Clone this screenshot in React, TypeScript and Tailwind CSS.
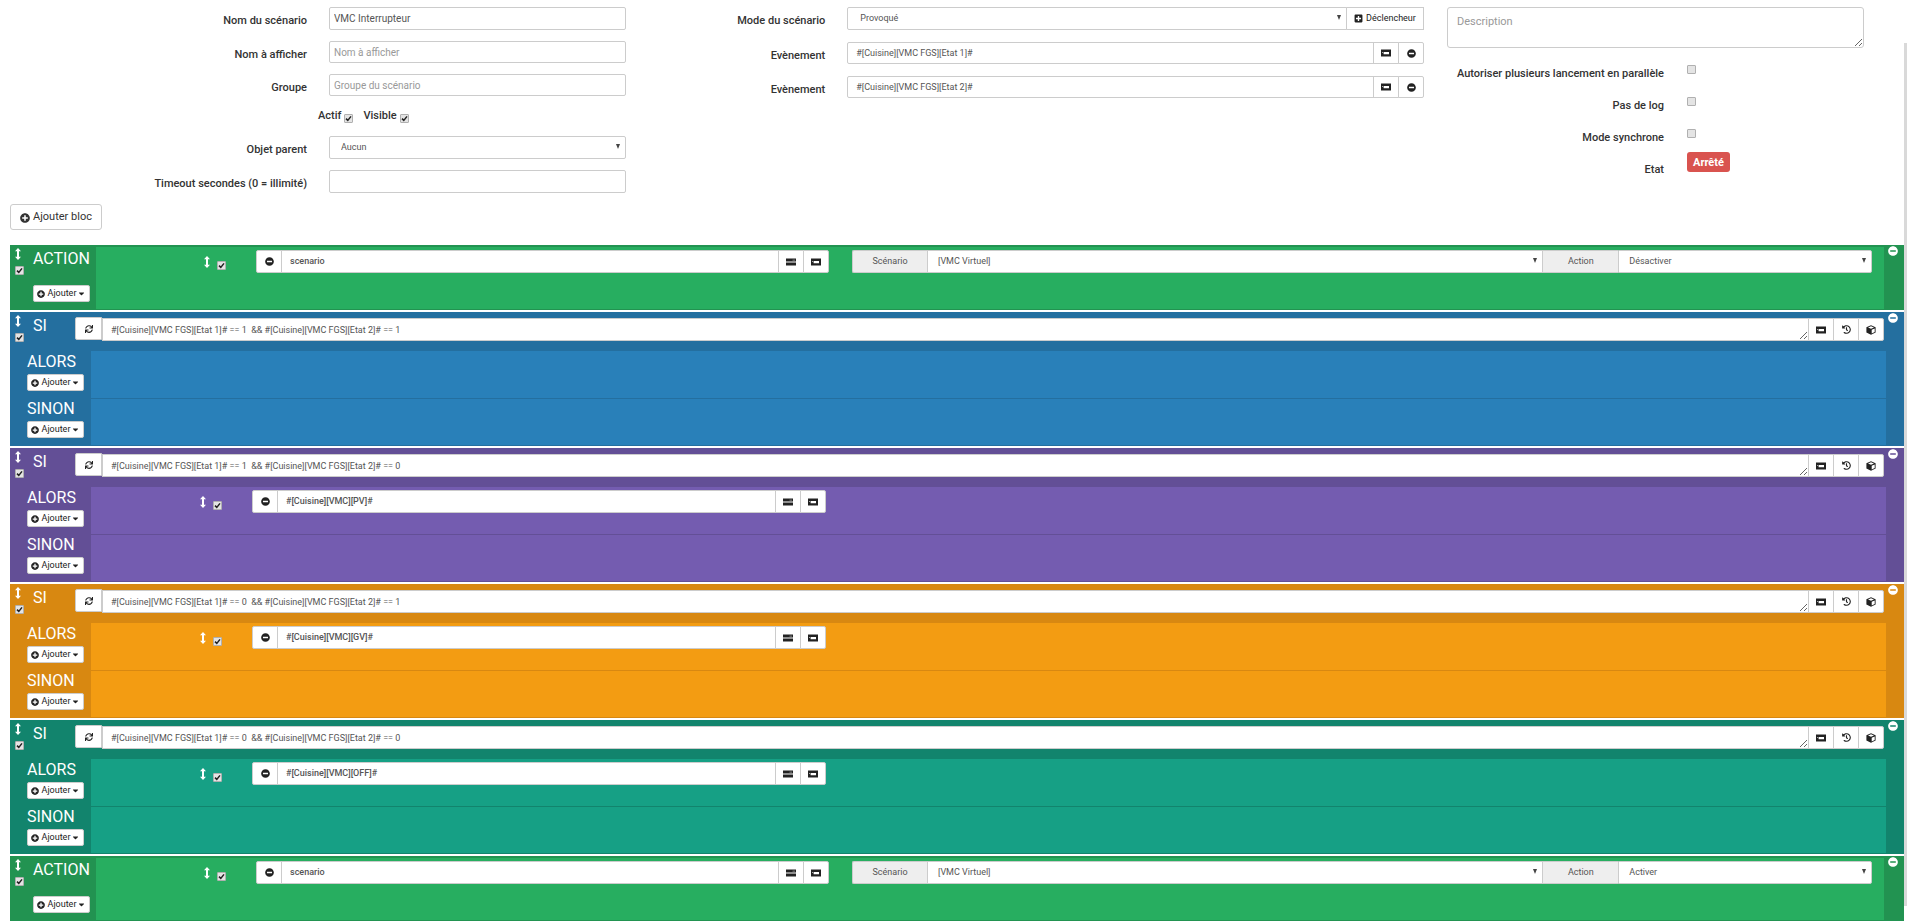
import { ReactNode, useState } from 'react';
import { FaCaretDown, FaHistory, FaMinusCircle, FaPlusCircle, FaPlusSquare, FaSync } from 'react-icons/fa';

const themes = {
  green: { light: 'bg-[#27ae60]', dark: 'bg-[#229351]', line: 'border-[#229351]' },
  blue: { light: 'bg-[#2980b9]', dark: 'bg-[#246f9f]', line: 'border-[#246f9f]' },
  purple: { light: 'bg-[#745cb0]', dark: 'bg-[#634f96]', line: 'border-[#634f96]' },
  orange: { light: 'bg-[#f39c12]', dark: 'bg-[#d88811]', line: 'border-[#d88811]' },
  teal: { light: 'bg-[#16a085]', dark: 'bg-[#12846d]', line: 'border-[#12846d]' },
};

type Theme = keyof typeof themes;

const blocks: { type: 'action' | 'if'; theme: Theme; value: string; command?: string }[] = [
  { type: 'action', theme: 'green', value: 'Désactiver' },
  { type: 'if', theme: 'blue', value: '#[Cuisine][VMC FGS][Etat 1]# == 1  && #[Cuisine][VMC FGS][Etat 2]# == 1' },
  { type: 'if', theme: 'purple', value: '#[Cuisine][VMC FGS][Etat 1]# == 1  && #[Cuisine][VMC FGS][Etat 2]# == 0', command: '#[Cuisine][VMC][PV]#' },
  { type: 'if', theme: 'orange', value: '#[Cuisine][VMC FGS][Etat 1]# == 0  && #[Cuisine][VMC FGS][Etat 2]# == 1', command: '#[Cuisine][VMC][GV]#' },
  { type: 'if', theme: 'teal', value: '#[Cuisine][VMC FGS][Etat 1]# == 0  && #[Cuisine][VMC FGS][Etat 2]# == 0', command: '#[Cuisine][VMC][OFF]#' },
  { type: 'action', theme: 'green', value: 'Activer' },
];

const field = 'w-full min-w-0 border border-[#ccc] bg-white text-[#555] outline-none placeholder:text-[#999]';
const textField = `${field} max-w-[297px] rounded-[2px] px-1 text-[10px]`;

function ListIcon() {
  return (
    <svg viewBox="0 0 10 8" className="h-2 w-[10px]">
      <path d="M0 .5h10v7H0z" fill="#222" />
      <path d="M2.6 3h5.4v2.2H2.6zM1 3.2h.8v.8H1z" fill="#fff" />
    </svg>
  );
}

function TasksIcon() {
  return (
    <svg viewBox="0 0 10 8" className="h-2 w-[10px]">
      <path d="M0 .5h10v3H0zM0 4.5h10v3H0z" fill="#222" />
      <path d="M6.5 1.7H9v.8H6.500z" fill="#999" />
    </svg>
  );
}

function CubeIcon() {
  return (
    <svg viewBox="0 0 10 10" className="size-[10px]">
      <path d="M5 .3 9.6 2.2v5.2L5 9.7.4 7.4V2.2z" fill="#222" />
      <path d="M5 1.2 8 2.5 5 3.7 2 2.5zM5.7 4.8l3-1.3v3.4l-3 1.5z" fill="#fff" />
    </svg>
  );
}

function MoveIcon() {
  return (
    <svg viewBox="0 0 6 12" className="h-3 w-[6px]">
      <path d="M3 0 6 3.2H4v5.6h2L3 12 0 8.8h2V3.2H0z" fill="#fff" />
    </svg>
  );
}

function Check({ label, checked = false }: { label?: string; checked?: boolean }) {
  const [on, setOn] = useState(checked);
  return (
    <span className="relative inline-flex size-[9px] shrink-0">
      <input
        type="checkbox"
        aria-label={label}
        checked={on}
        onChange={e => setOn(e.target.checked)}
        className="size-[9px] appearance-none rounded-[1px] border border-[#b0b0b0] bg-[#e4e4e4]"
      />
      {on && (
        <svg viewBox="0 0 9 9" className="pointer-events-none absolute inset-0 size-[9px]">
          <path d="M2 4.6 3.8 6.4 7 2.4" fill="none" stroke="#222" strokeWidth="1.5" />
        </svg>
      )}
    </span>
  );
}

function IconButton({ title, last, children }: { title: string; last?: boolean; children: ReactNode }) {
  return (
    <button
      type="button"
      title={title}
      className={`-ml-px flex w-[26px] shrink-0 items-center justify-center border border-[#ccc] bg-white text-[9px] text-[#222] ${last ? 'rounded-r-[2px]' : ''}`}
    >
      {children}
    </button>
  );
}

function Select({ id, label, options, className = '' }: { id?: string; label?: string; options: string[]; className?: string }) {
  return (
    <div className="relative min-w-0 flex-1">
      <select id={id} aria-label={label} className={`${field} block h-[23px] appearance-none pt-px text-[9px] ${className}`}>
        {options.map(o => (
          <option key={o}>{o}</option>
        ))}
      </select>
      <svg viewBox="0 0 4 5" className="pointer-events-none absolute top-2 right-[6px] h-[5px] w-1">
        <path d="M0 0h4L2 5z" fill="#444" />
      </svg>
    </div>
  );
}

function AddButton() {
  return (
    <button
      type="button"
      className="flex h-[17px] w-[57px] items-center justify-center gap-[3px] rounded-[2px] border border-[#ccc] bg-white text-[9px] text-[#222]"
    >
      <FaPlusCircle className="size-2" />
      Ajouter
      <FaCaretDown className="-ml-[2px] size-[9px]" />
    </button>
  );
}

function FormRow({ id, label, children }: { id: string; label: string; children: ReactNode }) {
  return (
    <div className="flex gap-[22px]">
      <label htmlFor={id} className="min-w-0 flex-1 pt-[5px] text-right text-[11px] leading-[17px] font-medium">
        {label}
      </label>
      {children}
    </div>
  );
}

function EventRow({ id, value }: { id: string; value: string }) {
  return (
    <FormRow id={id} label="Evènement">
      <div className="flex h-[22px] w-[81%]">
        <input id={id} defaultValue={value} className={`${field} rounded-l-[2px] px-2 pt-px text-[9px]`} />
        <IconButton title="Choisir une commande">
          <ListIcon />
        </IconButton>
        <IconButton title="Supprimer" last>
          <FaMinusCircle />
        </IconButton>
      </div>
    </FormRow>
  );
}

function Command({ value }: { value: string }) {
  return (
    <div className="flex h-[23px]">
      <div className="flex w-[160px] shrink-0 items-start justify-end gap-[7px] pt-[6px] pr-[30px]">
        <MoveIcon />
        <span className="flex pt-[5px]">
          <Check label="Activer l'action" checked />
        </span>
      </div>
      <div className="flex min-w-0 flex-1">
        <button
          type="button"
          title="Supprimer"
          className="flex w-[26px] shrink-0 items-center justify-center rounded-l-[2px] border border-[#ccc] bg-white text-[9px] text-[#222]"
        >
          <FaMinusCircle />
        </button>
        <input aria-label="Commande" defaultValue={value} className={`${field} -ml-px px-2 pt-px text-[9px] font-medium`} />
        <IconButton title="Choisir une action">
          <TasksIcon />
        </IconButton>
        <IconButton title="Choisir une commande" last>
          <ListIcon />
        </IconButton>
      </div>
    </div>
  );
}

function Handle() {
  return (
    <div className="flex w-[23px] shrink-0 flex-col items-start gap-[6px] pt-[3px] pl-[5px]">
      <MoveIcon />
      <Check label="Activer le bloc" checked />
    </div>
  );
}

function RemoveBlock() {
  return (
    <div className="w-5 shrink-0 pt-px pl-1">
      <button type="button" title="Supprimer le bloc" className="flex text-white">
        <FaMinusCircle className="size-[10px]" />
      </button>
    </div>
  );
}

function ActionBlock({ theme, value }: { theme: Theme; value: string }) {
  const t = themes[theme];
  return (
    <section className={`flex h-[65px] ${t.dark}`}>
      <Handle />
      <div className="flex w-[63px] shrink-0 flex-col items-start gap-[15px] pt-[3px]">
        <h2 className="text-[16px] leading-[22px] text-white">ACTION</h2>
        <AddButton />
      </div>
      <div className={`mt-[2px] mb-px grid min-w-0 flex-1 grid-cols-[733fr_1020fr] gap-[23px] pt-[3px] pr-3 ${t.light}`}>
        <Command value="scenario" />
        <div className="flex h-[23px]">
          <span className="flex w-[75px] shrink-0 items-center justify-center rounded-l-[2px] border-y border-l border-[#ccc] bg-[#eee] text-[9px] text-[#555]">
            Scénario
          </span>
          <div className="flex min-w-0 flex-[617]">
            <Select label="Scénario" options={['[VMC Virtuel]']} className="px-[10px]" />
          </div>
          <span className="flex w-[75px] shrink-0 items-center justify-center border-y border-[#ccc] bg-[#eee] text-[9px] text-[#555]">
            Action
          </span>
          <div className="flex min-w-0 flex-[254]">
            <Select label="Action" options={[value]} className="rounded-r-[2px] px-[10px]" />
          </div>
        </div>
      </div>
      <RemoveBlock />
    </section>
  );
}

function IfBlock({ theme, value, command }: { theme: Theme; value: string; command?: string }) {
  const t = themes[theme];
  return (
    <section className={`pb-px ${t.dark}`}>
      <div className="flex h-[39px]">
        <Handle />
        <h2 className="w-[42px] shrink-0 pt-[3px] text-[16px] leading-[22px] text-white">SI</h2>
        <div className="flex min-w-0 flex-1 pt-[5px]">
          <button
            type="button"
            title="Répéter"
            className="flex h-[23px] w-[27px] shrink-0 items-center justify-center rounded-l-[2px] border border-[#ccc] bg-white text-[#222]"
          >
            <FaSync className="size-2" />
          </button>
          <div className="flex h-6 min-w-0 flex-1 pt-px">
            <textarea
              aria-label="Condition"
              defaultValue={value}
              className={`${field} block h-full resize-y overflow-hidden px-2 pt-[5px] text-[9px] leading-3 whitespace-pre`}
            />
            <IconButton title="Choisir une commande">
              <ListIcon />
            </IconButton>
            <IconButton title="Historique">
              <FaHistory />
            </IconButton>
            <IconButton title="Objet" last>
              <CubeIcon />
            </IconButton>
          </div>
        </div>
        <RemoveBlock />
      </div>
      {['ALORS', 'SINON'].map((name, i) => (
        <div key={name} className="flex h-[47px] pr-[18px]">
          <div className="flex w-[81px] shrink-0 flex-col items-start gap-px pl-[17px]">
            <h3 className="text-[16px] leading-[22px] text-white">{name}</h3>
            <AddButton />
          </div>
          <div
            className={`grid min-w-0 flex-1 grid-cols-[735fr_1060fr] ${t.light} ${i === 1 ? `border-t ${t.line}` : ''}`}
          >
            {i === 0 && command && (
              <div className="pt-[3px] pl-px">
                <Command value={command} />
              </div>
            )}
          </div>
        </div>
      ))}
    </section>
  );
}

export default function App() {
  return (
    <div className="flex min-h-screen bg-white font-['Roboto',sans-serif] text-[11px] text-[#333]">
      <main className="min-w-0 flex-1 pl-[10px]">
        <form className="flex h-[204px] items-start pt-[7px]">
          {/* General */}
          <div className="flex w-[616px] shrink-0 flex-col gap-[11px]">
            <FormRow id="name" label="Nom du scénario">
              <input id="name" defaultValue="VMC Interrupteur" className={`${textField} h-[23px]`} />
            </FormRow>
            <FormRow id="display" label="Nom à afficher">
              <input id="display" placeholder="Nom à afficher" className={`${textField} h-[22px]`} />
            </FormRow>
            <FormRow id="group" label="Groupe">
              <input id="group" placeholder="Groupe du scénario" className={`${textField} h-[22px]`} />
            </FormRow>
            <div className="flex h-[18px] gap-[10px] pl-[308px] font-medium">
              <label className="flex items-center gap-[3px]">
                Actif
                <span className="flex pt-1"><Check checked /></span>
              </label>
              <label className="flex items-center gap-[3px]">
                Visible
                <span className="flex pt-1"><Check checked /></span>
              </label>
            </div>
            <FormRow id="parent" label="Objet parent">
              <div className="flex w-[297px]">
                <Select id="parent" options={['Aucun']} className="rounded-[2px] px-[11px]" />
              </div>
            </FormRow>
            <FormRow id="timeout" label="Timeout secondes (0 = illimité)">
              <input id="timeout" className={`${textField} h-[23px]`} />
            </FormRow>
          </div>

          {/* Trigger */}
          <div className="ml-[86px] flex min-w-0 flex-[712] flex-col gap-3">
            <FormRow id="mode" label="Mode du scénario">
              <div className="flex w-[81%]">
                <Select id="mode" options={['Provoqué']} className="rounded-l-[2px] px-3" />
                <button
                  type="button"
                  className="-ml-px flex h-[23px] w-[78px] shrink-0 items-center justify-center gap-[3px] border border-[#ccc] bg-white text-[9px] text-[#222]"
                >
                  <FaPlusSquare />
                  Déclencheur
                </button>
              </div>
            </FormRow>
            <EventRow id="event1" value="#[Cuisine][VMC FGS][Etat 1]#" />
            <EventRow id="event2" value="#[Cuisine][VMC FGS][Etat 2]#" />
          </div>

          {/* Options */}
          <div className="mr-10 ml-[23px] min-w-0 flex-[417]">
            <textarea
              aria-label="Description"
              placeholder="Description"
              className="block h-[41px] w-full rounded-[3px] border border-[#ccc] px-[9px] py-[6px] text-[11px] leading-4 outline-none placeholder:text-[#999]"
            />
            <div className="grid grid-cols-[217px_1fr] gap-x-[23px] pt-[17px] leading-[17px] font-medium">
              {['Autoriser plusieurs lancement en parallèle', 'Pas de log', 'Mode synchrone'].map(label => (
                <label key={label} className="col-span-2 grid h-8 grid-cols-subgrid">
                  <span className="text-right whitespace-nowrap">{label}</span>
                  <span className="flex"><Check /></span>
                </label>
              ))}
              <span className="text-right">Etat</span>
              <span className="-mt-[9px] flex h-5 w-[43px] items-center justify-center rounded-[3px] bg-[#d9534f] font-bold text-white">
                Arrêté
              </span>
            </div>
          </div>
        </form>

        <button
          type="button"
          className="flex h-[26px] w-[92px] items-center justify-center gap-[3px] rounded-[3px] border border-[#ccc] bg-white pt-px text-[11px]"
        >
          <FaPlusCircle className="size-[10px]" />
          Ajouter bloc
        </button>

        {/* Blocks */}
        <div className="flex flex-col gap-[2px] pt-[15px]">
          {blocks.map((b, i) =>
            b.type === 'action' ? (
              <ActionBlock key={i} theme={b.theme} value={b.value} />
            ) : (
              <IfBlock key={i} theme={b.theme} value={b.value} command={b.command} />
            )
          )}
        </div>
      </main>
      <div className="mt-[43px] mb-[17px] w-[3px] shrink-0 bg-[#d9d9d9]" />
    </div>
  );
}
